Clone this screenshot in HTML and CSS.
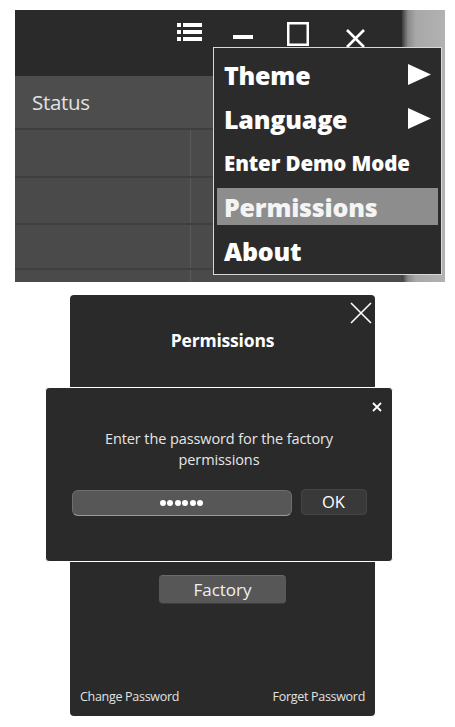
FILE: index.html
```html
<!DOCTYPE html>
<html>
<head>
<meta charset="utf-8">
<link rel="stylesheet" href="styles.css">
</head>
<body>
<div class="shot">
  <div class="app">
    <div class="titlebar">
      <svg class="ic-list" width="25" height="18" viewBox="0 0 25 18">
        <rect x="0" y="0" width="4" height="4" fill="#fff"/>
        <rect x="6" y="0" width="19" height="4" fill="#fff"/>
        <rect x="0" y="7" width="4" height="4" fill="#fff"/>
        <rect x="6" y="7" width="19" height="4" fill="#fff"/>
        <rect x="0" y="14" width="4" height="4" fill="#fff"/>
        <rect x="6" y="14" width="19" height="4" fill="#fff"/>
      </svg>
      <svg class="ic-min" width="20" height="4" viewBox="0 0 20 4">
        <rect x="0" y="0" width="20" height="4" fill="#fff"/>
      </svg>
      <svg class="ic-max" width="22" height="24" viewBox="0 0 22 24">
        <rect x="1.25" y="1.25" width="19.5" height="21.5" fill="none" stroke="#fff" stroke-width="2.5"/>
      </svg>
      <svg class="ic-close" width="19" height="19" viewBox="0 0 19 19">
        <path d="M1 1 L18 18 M18 1 L1 18" stroke="#fff" stroke-width="2.6" fill="none"/>
      </svg>
    </div>
    <div class="grid-head">
      <div class="cell-a head-text">Status</div>
    </div>
    <div class="grid-row r1"><div class="cell-a"></div><div class="cell-b"></div></div>
    <div class="grid-row r2"><div class="cell-a"></div><div class="cell-b"></div></div>
    <div class="grid-row r3"><div class="cell-a"></div><div class="cell-b"></div></div>
    <div class="grid-row r4"><div class="cell-a"></div><div class="cell-b"></div></div>
  </div>
  <div class="backdrop"></div>
  <div class="menu">
    <div class="item big"><span>Theme</span>
      <svg width="23" height="21" viewBox="0 0 23 21"><polygon points="0,0 23,10.5 0,21" fill="#fff"/></svg>
    </div>
    <div class="item big"><span>Language</span>
      <svg width="23" height="21" viewBox="0 0 23 21"><polygon points="0,0 23,10.5 0,21" fill="#fff"/></svg>
    </div>
    <div class="item small"><span>Enter Demo Mode</span></div>
    <div class="item big active"><span>Permissions</span></div>
    <div class="item big"><span>About</span></div>
  </div>
</div>

<div class="stack">
  <div class="perm">
    <div class="perm-head">
      <div class="perm-title">Permissions</div>
      <svg class="perm-close" width="22" height="22" viewBox="0 0 22 22">
        <path d="M1 1 L21 21 M21 1 L1 21" stroke="#fff" stroke-width="1.6" fill="none"/>
      </svg>
    </div>
    <div class="perm-body">
      <button class="factory">Factory</button>
      <div class="perm-foot">
        <span>Change Password</span>
        <span>Forget Password</span>
      </div>
    </div>
  </div>
  <div class="pwd">
    <svg class="pwd-close" width="10" height="10" viewBox="0 0 10 10">
      <path d="M1 1 L9 9 M9 1 L1 9" stroke="#fff" stroke-width="1.8" fill="none"/>
    </svg>
    <div class="pwd-text">Enter the password for the factory<br>permissions</div>
    <div class="pwd-row">
      <div class="pwd-input"><span class="dot"></span><span class="dot"></span><span class="dot"></span><span class="dot"></span><span class="dot"></span><span class="dot"></span></div>
      <button class="ok">OK</button>
    </div>
  </div>
</div>
</body>
</html>
```

FILE: styles.css
```css
html, body {
  margin: 0;
  padding: 0;
  background: #ffffff;
}
body {
  font-family: "Open Sans", "Noto Sans", "Liberation Sans", sans-serif;
  width: 455px;
  height: 727px;
  overflow: hidden;
}

/* ---------- top screenshot ---------- */
.shot {
  position: relative;
  margin: 10px 0 0 15px;
  width: 430px;
  height: 272px;
  display: flex;
  overflow: hidden;
}
.app {
  width: 387px;
  display: flex;
  flex-direction: column;
  background: #4a4a4a;
}
.backdrop {
  flex: 1;
  background: linear-gradient(to right, #3a3a3a 0px, #8a8a8a 6px, #a8a8a8 14px, #b2b2b2 100%);
}
.titlebar {
  height: 66px;
  flex: none;
  background: #2a2a2a;
  display: flex;
  align-items: flex-start;
  padding-left: 162px;
  box-sizing: border-box;
}
.ic-list { margin-top: 13px; }
.ic-min { margin-top: 25px; margin-left: 31px; }
.ic-max { margin-top: 12px; margin-left: 34px; }
.ic-close { margin-top: 19px; margin-left: 37px; }

.grid-head {
  height: 54px;
  flex: none;
  background: #4d4d4d;
  border-bottom: 2px solid #3e3e3e;
  box-sizing: border-box;
  display: flex;
  align-items: center;
}
.head-text {
  padding-left: 17px;
  color: #e2e2e2;
  font-size: 20.5px;
  font-family: "Open Sans", "Noto Sans", sans-serif;
  letter-spacing: -0.3px;
  margin-top: 0px;
}
.grid-row {
  display: flex;
  flex: none;
  border-bottom: 2px solid #3f3f3f;
  box-sizing: border-box;
}
.r1 { height: 48px; }
.r2 { height: 47px; }
.r3 { height: 45px; }
.r4 { height: 14px; border-bottom: none; }
.cell-a {
  width: 175px;
  border-right: 1px solid #5a5a5a;
}
.grid-head .cell-a { border-right: none; width: auto; }
.cell-b { flex: 1; }

/* ---------- context menu ---------- */
.menu {
  position: absolute;
  left: 198px;
  top: 37px;
  width: 229px;
  height: 228px;
  box-sizing: border-box;
  border: 1px solid #d8d8d8;
  background: #2b2b2b;
  padding: 8px 3px 5px 3px;
  display: flex;
  flex-direction: column;
  gap: 7px;
}
.item {
  height: 37px;
  flex: none;
  display: flex;
  align-items: center;
  justify-content: space-between;
  padding: 0 7px 0 7px;
  color: #ffffff;
  font-weight: 800;
  font-family: "Open Sans", "Noto Sans", sans-serif;
  white-space: nowrap;
}
.item.big { font-size: 25px; letter-spacing: -0.2px; }
.item.small { font-size: 20.5px; letter-spacing: -0.1px; }
.item.active {
  background: #8d8d8d;
  color: #f4f4f4;
}

/* ---------- dialogs ---------- */
.stack {
  position: relative;
  margin-top: 13px;
  height: 423px;
}
.perm {
  margin-left: 70px;
  width: 305px;
  height: 421px;
  background: #2a2a2a;
  border-radius: 4px;
  display: flex;
  flex-direction: column;
  color: #fff;
}
.perm-head {
  position: relative;
  height: 91px;
  display: flex;
  justify-content: center;
  padding-top: 33px;
  box-sizing: border-box;
}
.perm-title {
  font-weight: 700;
  font-size: 17.5px;
  letter-spacing: -0.2px;
}
.perm-close {
  position: absolute;
  right: 3px;
  top: 7px;
}
.perm-body {
  flex: 1;
  display: flex;
  flex-direction: column;
  align-items: center;
  padding-top: 189px;
}
.factory {
  width: 127px;
  height: 29px;
  background: #575757;
  border: none;
  border-top: 1px solid #6a6a6a;
  border-bottom: 1px solid #3c3c3c;
  border-radius: 4px;
  color: #f0f0f0;
  font-family: "Open Sans", "Noto Sans", sans-serif;
  font-size: 17px;
  padding: 0;
  line-height: 28px;
}
.perm-foot {
  margin-top: auto;
  align-self: stretch;
  display: flex;
  justify-content: space-between;
  padding: 0 10px 11px 10px;
  font-size: 12.5px;
  color: #e2e2e2;
  letter-spacing: -0.3px;
}

.pwd {
  position: absolute;
  left: 45px;
  top: 92px;
  width: 348px;
  height: 175px;
  box-sizing: border-box;
  border: 1px solid #ffffff;
  background: #2a2a2a;
  border-radius: 4px;
  display: flex;
  flex-direction: column;
  align-items: center;
  color: #e6e6e6;
}
.pwd-close {
  position: absolute;
  right: 10px;
  top: 14px;
}
.pwd-text {
  margin-top: 40px;
  text-align: center;
  font-size: 14.5px;
  line-height: 21px;
  letter-spacing: -0.1px;
}
.pwd-row {
  margin-top: 20px;
  display: flex;
  align-items: center;
  gap: 9px;
}
.pwd-input {
  width: 220px;
  height: 26px;
  box-sizing: border-box;
  background: #575757;
  border: 1px solid #6e6e6e;
  border-bottom-color: #9a9a9a;
  border-radius: 6px;
  display: flex;
  align-items: center;
  justify-content: center;
  gap: 1.6px;
}
.dot {
  width: 6px;
  height: 6px;
  border-radius: 50%;
  background: #ffffff;
}
.ok {
  width: 66px;
  height: 26px;
  background: #393939;
  border: 1px solid #454545;
  border-radius: 4px;
  color: #ffffff;
  font-family: "Open Sans", "Noto Sans", sans-serif;
  font-size: 16.5px;
  padding: 0;
  line-height: 22px;
  margin-top: -2px;
}
```
